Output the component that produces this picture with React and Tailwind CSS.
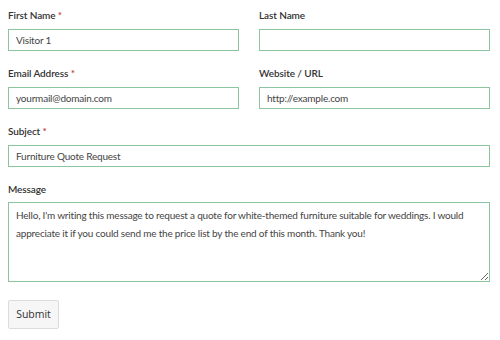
import React, { useState } from 'react';

const Label = ({ children, required }) => (
  <label className="block h-[18px] text-[10px] leading-[18px] font-semibold tracking-[-0.1px] text-[#333]">
    {children}
    {required && <span className="text-[#c0392b]"> *</span>}
  </label>
);

const inputCls =
  'block w-full h-[22px] border border-[#8cc49f] bg-white px-[7px] text-[10px] tracking-[-0.2px] text-[#444] outline-none';

export default function App() {
  const [form, setForm] = useState({
    firstName: 'Visitor 1',
    lastName: '',
    email: 'yourmail@domain.com',
    website: 'http://example.com',
    subject: 'Furniture Quote Request',
    message:
      "Hello, I'm writing this message to request a quote for white-themed furniture suitable for weddings. I would appreciate it if you could send me the price list by the end of this month. Thank you!",
  });

  const handleChange = (e) => {
    const { name, value } = e.target;
    setForm((prev) => ({ ...prev, [name]: value }));
  };

  return (
    <div
      className="w-[500px] h-[340px] bg-white pl-[8px] pr-[10px] pt-[6px]"
      style={{ fontFamily: '"Segoe UI", Lato, sans-serif' }}
    >
      <div className="grid grid-cols-2 gap-x-[20px]">
        <div className="mb-[13px]">
          <Label required>First Name</Label>
          <input className={inputCls + ' mt-[5px]'} name="firstName" value={form.firstName} onChange={handleChange} />
        </div>
        <div className="mb-[13px]">
          <Label>Last Name</Label>
          <input className={inputCls + ' mt-[5px]'} name="lastName" value={form.lastName} onChange={handleChange} />
        </div>
        <div className="mb-[13px]">
          <Label required>Email Address</Label>
          <input className={inputCls + ' mt-[5px]'} name="email" value={form.email} onChange={handleChange} />
        </div>
        <div className="mb-[13px]">
          <Label>Website / URL</Label>
          <input className={inputCls + ' mt-[5px]'} name="website" value={form.website} onChange={handleChange} />
        </div>
      </div>

      <div className="mb-[13px]">
        <Label required>Subject</Label>
        <input className={inputCls + ' mt-[5px]'} name="subject" value={form.subject} onChange={handleChange} />
      </div>

      <div>
        <Label>Message</Label>
        <textarea
          className="mt-[4px] block w-full h-[80px] border border-[#8cc49f] bg-white px-[7px] py-[3px] text-[10px] tracking-[-0.2px] leading-[18px] text-[#444] outline-none"
          name="message"
          value={form.message}
          onChange={handleChange}
        />
      </div>

      <button
        type="button"
        className="mt-[18px] h-[29px] w-[51px] rounded-[2px] border border-[#dcdcdc] bg-[#f6f6f6] text-[10.5px] text-[#333]"
        style={{ fontFamily: '"Open Sans", sans-serif' }}
      >
        Submit
      </button>
    </div>
  );
}
